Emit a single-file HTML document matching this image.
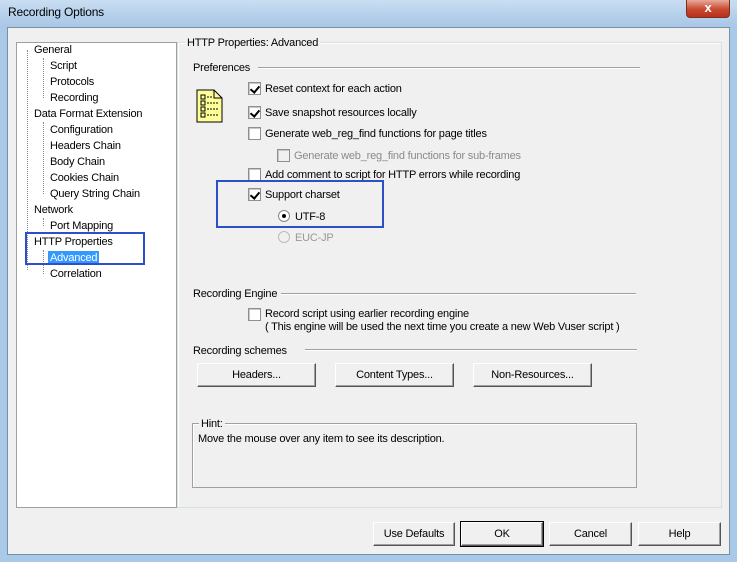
<!DOCTYPE html>
<html><head><style>
*{margin:0;padding:0;box-sizing:border-box}
body{width:737px;height:562px;overflow:hidden;background:#a9c9e8;font-family:"Liberation Sans",sans-serif;font-size:11px;line-height:15px;letter-spacing:-0.2px;color:#000;position:relative}
.a{position:absolute;white-space:nowrap}
.title{left:0;top:0;width:737px;height:28px;background:linear-gradient(180deg,#c9def2 0%,#b7d1ec 50%,#a8c6e6 100%)}
.client{left:7px;top:27px;width:723px;height:528px;background:#f0f0f0;border:1px solid #7a8fa5}
.tree{left:16px;top:42px;width:161px;height:466px;background:#fff;border:1px solid #a0a0a0}
.grp{border:1px solid #d5dfe5;box-shadow:inset 1px 1px 0 #fff}
.line{height:2px;border-top:1px solid #a0a0a0;border-bottom:1px solid #fff}
.cb{width:13px;height:13px;border:1px solid #8e8f8f;background:#fff;box-shadow:inset 1px 1px 0 #c8c8c8}
.cb.on::after{content:"";position:absolute;left:3px;top:1px;width:4px;height:7px;border:solid #000;border-width:0 2px 2px 0;transform:rotate(40deg)}
.btn{height:24px;background:#f0f0f0;border:1px solid;border-color:#fff #555 #555 #fff;box-shadow:inset -1px -1px 0 #a0a0a0;text-align:center;line-height:22px}
.dot{border-left:1px dotted #888}
.blue{border:2px solid #2d50c8}
</style></head><body>
<div class="a title"></div>
<div class="a" style="left:8px;top:5px;font-size:12px">Recording Options</div>
<div class="a" style="left:686px;top:0;width:44px;height:18px;background:linear-gradient(#e9a99b,#c9482f 55%,#b8301c);border:1px solid #7e2d20;border-top:none;border-radius:0 0 4px 4px;color:#fff;text-align:center;font-weight:bold;font-size:13px;line-height:16px">x</div>
<div class="a client"></div>
<div class="a tree"></div>
<div class="a dot" style="left:27px;top:50px;height:220px"></div>
<div class="a dot" style="left:43px;top:58px;height:40px"></div>
<div class="a dot" style="left:43px;top:122px;height:72px"></div>
<div class="a dot" style="left:43px;top:218px;height:8px"></div>
<div class="a dot" style="left:43px;top:250px;height:24px"></div>
<div class="a" style="left:34px;top:43px">General</div>
<div class="a" style="left:50px;top:59px">Script</div>
<div class="a" style="left:50px;top:75px">Protocols</div>
<div class="a" style="left:50px;top:91px">Recording</div>
<div class="a" style="left:34px;top:107px">Data Format Extension</div>
<div class="a" style="left:50px;top:123px">Configuration</div>
<div class="a" style="left:50px;top:139px">Headers Chain</div>
<div class="a" style="left:50px;top:155px">Body Chain</div>
<div class="a" style="left:50px;top:171px">Cookies Chain</div>
<div class="a" style="left:50px;top:187px">Query String Chain</div>
<div class="a" style="left:34px;top:203px">Network</div>
<div class="a" style="left:50px;top:219px">Port Mapping</div>
<div class="a" style="left:34px;top:235px">HTTP Properties</div>
<div class="a" style="left:48px;top:251px;background:#3399ff;color:#fff;padding:0 2px;height:14px;line-height:14px">Advanced</div>
<div class="a" style="left:50px;top:267px">Correlation</div>
<div class="a blue" style="left:25px;top:232px;width:120px;height:33px"></div>
<div class="a grp" style="left:177px;top:42px;width:545px;height:466px"></div>
<div class="a" style="left:185px;top:36px;background:#f0f0f0;padding:0 2px">HTTP Properties: Advanced</div>
<div class="a" style="left:193px;top:61px">Preferences</div>
<div class="a line" style="left:258px;top:67px;width:382px"></div>
<svg class="a" style="left:196px;top:89px" width="28" height="34" viewBox="0 0 28 34"><path d="M1 1H18L26 9V33H1Z" fill="#ffff99" stroke="#000"/><path d="M18 1V9H26" fill="none" stroke="#000"/><g fill="none" stroke="#000"><rect x="5" y="6" width="4" height="4"/><rect x="5" y="12" width="4" height="4"/><rect x="5" y="18" width="4" height="4"/><rect x="5" y="24" width="4" height="4"/><path d="M11 8H17M11 14H22M11 20H22M11 26H22" stroke-dasharray="2 1"/></g></svg>
<div class="a cb on" style="left:248px;top:82px"></div><div class="a" style="left:265px;top:82px">Reset context for each action</div>
<div class="a cb on" style="left:248px;top:106px"></div><div class="a" style="left:265px;top:106px">Save snapshot resources locally</div>
<div class="a cb" style="left:248px;top:127px"></div><div class="a" style="left:265px;top:127px">Generate web_reg_find functions for page titles</div>
<div class="a cb" style="left:277px;top:149px;background:#f0f0f0"></div><div class="a" style="left:294px;top:149px;color:#8a8a8a">Generate web_reg_find functions for sub-frames</div>
<div class="a cb" style="left:248px;top:168px"></div><div class="a" style="left:265px;top:168px">Add comment to script for HTTP errors while recording</div>
<div class="a cb on" style="left:248px;top:188px"></div><div class="a" style="left:265px;top:188px">Support charset</div>
<div class="a" style="left:278px;top:210px;width:12px;height:12px;border-radius:50%;border:1px solid #888;background:#fff"><div style="position:absolute;left:3px;top:3px;width:4px;height:4px;border-radius:50%;background:#000"></div></div>
<div class="a" style="left:295px;top:210px">UTF-8</div>
<div class="a" style="left:278px;top:231px;width:12px;height:12px;border-radius:50%;border:1px solid #bbb"></div>
<div class="a" style="left:295px;top:231px;color:#999">EUC-JP</div>
<div class="a blue" style="left:216px;top:180px;width:168px;height:48px"></div>
<div class="a" style="left:193px;top:287px">Recording Engine</div>
<div class="a line" style="left:281px;top:293px;width:355px"></div>
<div class="a cb" style="left:248px;top:308px"></div>
<div class="a" style="left:265px;top:307px">Record script using earlier recording engine</div>
<div class="a" style="left:265px;top:320px">( This engine will be used the next time you create a new Web Vuser script )</div>
<div class="a" style="left:193px;top:344px">Recording schemes</div>
<div class="a line" style="left:305px;top:349px;width:332px"></div>
<div class="a btn" style="left:197px;top:363px;width:119px">Headers...</div>
<div class="a btn" style="left:335px;top:363px;width:119px">Content Types...</div>
<div class="a btn" style="left:473px;top:363px;width:119px">Non-Resources...</div>
<div class="a grp" style="left:192px;top:423px;width:445px;height:65px;border-color:#a0a0a0"></div>
<div class="a" style="left:199px;top:417px;background:#f0f0f0;padding:0 2px">Hint:</div>
<div class="a" style="left:198px;top:432px">Move the mouse over any item to see its description.</div>
<div class="a btn" style="left:373px;top:522px;width:82px">Use Defaults</div>
<div class="a btn" style="left:461px;top:522px;width:82px;outline:1px solid #000">OK</div>
<div class="a btn" style="left:549px;top:522px;width:83px">Cancel</div>
<div class="a btn" style="left:638px;top:522px;width:83px">Help</div>
</body></html>
